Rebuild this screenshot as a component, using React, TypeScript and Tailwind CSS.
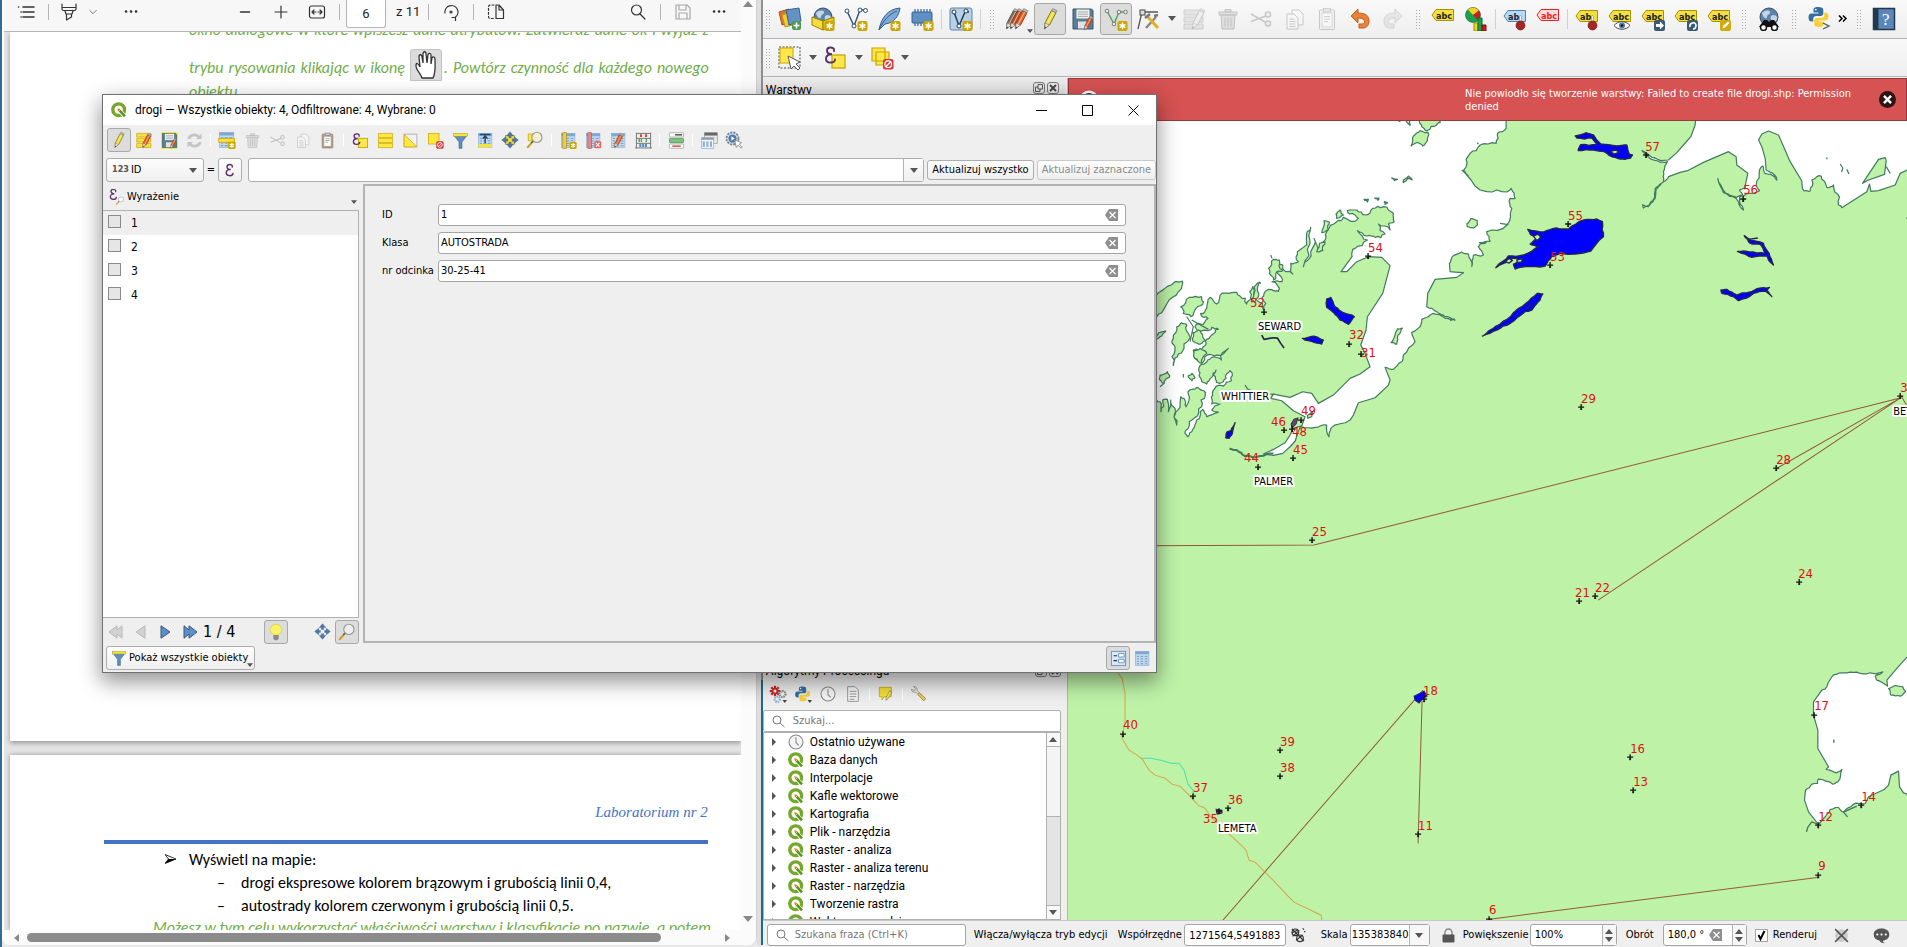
import React from "react";

const UI = "[font-family:'DejaVu_Sans_Condensed','Noto_Sans',sans-serif]";
const SEGOE = "[font-family:Roboto,'Open_Sans',sans-serif]";
const DOC = "[font-family:Carlito,Lato,sans-serif]";

type Kids = { children?: React.ReactNode };

/* ---------- icon helpers ---------- */

function Svg({ size = 24, children, faded = false }: Kids & { size?: number; faded?: boolean }) {
  return (
    <svg width={size} height={size} viewBox="0 0 24 24" fill="none" aria-hidden="true" className={faded ? "shrink-0 opacity-35 grayscale" : "shrink-0"}>
      {children}
    </svg>
  );
}

const Pencil = ({ fill = "#f0dc3c", tip = "#8a7a20", dx = 0 }: { fill?: string; tip?: string; dx?: number }) => (
  <g transform={`translate(${dx} 0)`}>
    <path d="M7 16 13.5 3.5l4.5 2.2L11.5 18 7 21z" fill={fill} stroke={tip} />
    <path d="m9.3 17 6.3-12" stroke="#fff" strokeOpacity=".6" />
    <path d="m7 16-.6 6 5-4-1.6-.6-1-.8z" fill="#e9dfc8" stroke="#777" strokeWidth=".7" />
    <path d="m6.5 22 .3-2.4 1.5.8z" fill="#333" />
    <path d="m13.5 3.5 1.2-2 4.4 2.2-1.1 2z" fill="#b9bdb6" stroke="#777" strokeWidth=".6" />
  </g>
);

const Star = () => (
  <g>
    <rect x="13.5" y="14" width="10" height="10" rx="2" fill="#c9a600" />
    <path d="M18.5 15.6v6.8M15.5 17.3l6 3.4M15.5 20.7l6-3.4" stroke="#fff" strokeWidth="1.5" />
  </g>
);

const Epsilon = ({ t = "" }: { t?: string }) => (
  <path transform={t} d="M15 6.5C15 4 8 3.500 8 7.500c0 3 3 3.700 5 3.700-3 0-6 1-6 4.500 0 5 8.500 5 9 .8M15 6.500v1.600" stroke="#5a2f6b" strokeWidth="1.900" strokeLinecap="round" />
);

const Tag = ({ label = "abc", fill = "#f3df3f", stroke = "#a89000", color = "#222" }: { label?: string; fill?: string; stroke?: string; color?: string }) => (
  <g>
    <path d="M1 9 5 3.500h17.500v11H5z" fill={fill} stroke={stroke} />
    <text x="5" y="12.500" fontSize="9" fontWeight="700" fill={color} className={UI}>{label}</text>
  </g>
);

const Pin = () => (
  <g>
    <path d="M17.500 16V8.500" stroke="#888" strokeWidth="2" />
    <path d="M17.500 16V9" stroke="#eee" />
    <circle cx="17.500" cy="18.500" r="4.500" fill="#a52626" stroke="#6f1414" strokeWidth=".6" />
  </g>
);

const QMark = ({ size = 16 }: { size?: number }) => (
  <Svg size={size}>
    <circle cx="11.500" cy="11.500" r="8.800" stroke="#74a72c" strokeWidth="5" />
    <path d="m12 12 8.500 9.500" stroke="#fff" strokeWidth="6" />
    <path d="m13 13 8 8.500" stroke="#5c9420" strokeWidth="4" />
    <path d="m9.500 9.500 5 1-4 4z" fill="#ee7913" />
  </Svg>
);

const Python = () => (
  <g>
    <path d="M11 2c-3.500 0-4.500 1.200-4.500 3v2.500h5v1H4.500C2.500 8.500 1.500 10 1.500 12.500s1 4 3 4h1.700V14c0-1.800 1.300-3 3-3h4.600c1.500 0 2.500-1 2.500-2.500V5c0-2-1.500-3-5.300-3z" fill="#356f9f" />
    <path d="M12 22c3.500 0 4.500-1.200 4.500-3v-2.500h-5v-1h7c2 0 3-1.500 3-4s-1-4-3-4h-1.200V10c0 1.800-1.300 3-3 3H9.700c-1.500 0-2.500 1-2.500 2.500V19c0 2 1.300 3 4.800 3z" fill="#f5cf3c" />
    <circle cx="8.800" cy="4.600" r=".9" fill="#fff" />
  </g>
);

const Disk = ({ bg = "" }: { bg?: string }) => (
  <g>
    {bg && <rect x="0" y="0" width="24" height="24" fill={bg} />}
    <path d="M2 2h18.500L22 3.500V22H2z" fill="#5b7d94" stroke="#35566b" />
    <rect x="5.500" y="2.500" width="13" height="9" fill="#eee" />
    <path d="M7 5h10M7 7.200h10M7 9.400h10" stroke="#aaa" />
    <rect x="7" y="14.500" width="9" height="7" fill="#dde3e6" />
    <g transform="translate(9 8) scale(.68)"><Pencil fill="#e8642a" tip="#a33b10" /></g>
  </g>
);

const Scissors = () => (
  <g stroke="#777" strokeWidth="1.600">
    <path d="M2 7 16 15M2 14.500 17 9" />
    <circle cx="19" cy="7.500" r="2.500" />
    <circle cx="19" cy="16.500" r="2.500" />
  </g>
);

const CopyI = () => (
  <g fill="#fff" stroke="#777">
    <path d="M10 3h7l4 4v11H10z" />
    <path d="M5 7h7l4 4v11H5z" />
    <path d="M7.500 12h5M7.500 14.500h6M7.500 17h6M7.500 19.500h6" />
  </g>
);

const PasteI = ({ fill = "#eee" }: { fill?: string }) => (
  <g>
    <rect x="4.500" y="3" width="15" height="19.500" rx="1" fill={fill} stroke="#777" />
    <rect x="7" y="6" width="10" height="14" fill="#fff" stroke="#888" strokeWidth=".7" />
    <path d="M9 9.500h6M9 12h6M9 14.500h4" stroke="#888" />
    <rect x="8.500" y="1.500" width="7" height="3.500" fill="#ccc" stroke="#777" strokeWidth=".8" />
  </g>
);

const Trash = () => (
  <g stroke="#8d5d5d" fill="#d7b2b2">
    <path d="M3 5h18v3H3zM9 2.500h6V5H9zM5 8h14l-1 14H6z" />
    <path d="M9 10.500v9M12 10.500v9M15 10.500v9" />
  </g>
);

const Funnel = () => (
  <g>
    <path d="M3 5h18l-7 9v9h-4v-9z" fill="#5f8fc4" stroke="#3c6690" />
    <rect x="2" y="2" width="20" height="4" fill="#f7e33e" stroke="#9a8a20" strokeWidth=".6" />
  </g>
);

const FourArrows = ({ center = false }: { center?: boolean }) => (
  <g>
    {center && <rect x="6" y="6" width="12" height="12" fill="#f5df3a" stroke="#c5a600" />}
    <path d="m12 1 4.500 5.500h-3V9h-3V6.500h-3zM12 23l4.500-5.500h-3V15h-3v2.500h-3zM1 12l5.500-4.500v3H9v3H6.500v3zM23 12l-5.500-4.500v3H15v3h2.500v3z" fill="#4d79ab" stroke="#2c4f78" strokeWidth=".5" />
  </g>
);

const Lens = ({ fill = "#eee" }: { fill?: string }) => (
  <g>
    <path d="m2.500 21.500 6-7" stroke="#c99f2a" strokeWidth="3" strokeLinecap="round" />
    <path d="m7 16 3-3" stroke="#555" strokeWidth="1.600" />
    <circle cx="14.500" cy="8.500" r="6.800" fill={fill} stroke="#999" strokeWidth="1.500" />
  </g>
);

const TableI = ({ children }: Kids) => (
  <g>
    <rect x="2" y="2" width="19" height="20" fill="#c6dbef" stroke="#8fb2d4" />
    <rect x="2" y="2" width="19" height="4" fill="#7ea8d3" />
    <path d="M4 9h3M4 12.500h3M4 16h3M4 19.500h3M9 9h4M9 12.500h4M9 16h4M9 19.500h4M15 9h4M15 12.500h4M15 16h4M15 19.500h4" stroke="#6f9ac6" strokeWidth="1.400" />
    {children}
  </g>
);

const NoBadge = () => (
  <g>
    <rect x="13" y="13" width="10.500" height="10.500" rx="2" fill="#d83a3a" />
    <circle cx="18.200" cy="18.200" r="3.300" stroke="#fff" strokeWidth="1.200" />
    <path d="m16 20.500 4.500-4.500" stroke="#fff" strokeWidth="1.200" />
  </g>
);

const Globe = () => (
  <g>
    <circle cx="12" cy="10" r="9" fill="#5d83ab" stroke="#33516f" />
    <path d="M5 6c3-3 7-3 8-1s-3 2-3 5-4 1-5-4zM14 9c2-2 5-1 6 1s-2 6-4 5-3-4-2-6z" fill="#c5d4e4" />
  </g>
);

const Clear = () => (
  <svg width="13" height="12" viewBox="0 0 13 12" aria-hidden="true">
    <path d="M4 0h9v12H4L0 6z" fill="#8e8e8e" />
    <path d="m4.500 3 6 6m0-6-6 6" stroke="#fff" strokeWidth="1.200" />
  </svg>
);

const Down = ({ small = false }: { small?: boolean }) => (
  <svg width={small ? 6 : 8} height={small ? 4 : 5} viewBox="0 0 8 5" aria-hidden="true" className="shrink-0"><path d="M0 0h8L4 5z" fill="#555" /></svg>
);

/* ---------- toolbar parts ---------- */

function Tool({ label, pressed = false, children }: Kids & { label: string; pressed?: boolean }) {
  return (
    <button type="button" aria-label={label} className={pressed ? "relative flex h-8 w-8 shrink-0 items-center justify-center rounded-[3px] border border-[#a8a8a8] bg-[#dcdcdc]" : "relative flex h-8 w-8 shrink-0 items-center justify-center"}>
      {children}
    </button>
  );
}

function Mini({ label, pressed = false, children }: Kids & { label: string; pressed?: boolean }) {
  return (
    <button type="button" aria-label={label} className={pressed ? "flex h-6 w-6 shrink-0 items-center justify-center rounded-[3px] border border-[#a8a8a8] bg-[#dcdcdc]" : "flex h-6 w-6 shrink-0 items-center justify-center"}>
      {children}
    </button>
  );
}

const Sep = () => <span className="mx-[2px] h-5 w-px shrink-0 bg-[#d2d2d2]" />;
const MiniSep = () => <span className="mx-[3px] h-3 w-px shrink-0 bg-white" />;
const Dots = () => <span className="block h-5 w-[5px] bg-[radial-gradient(#a9a9a9_1px,transparent_1px)] bg-[size:3px_3px]" />;
const Grip = () => <span className="flex w-4 shrink-0 justify-center"><Dots /></span>;
const GripStart = () => <span className="flex w-2.5 shrink-0 justify-center"><Dots /></span>;
const Drop = ({ label }: { label: string }) => (
  <button type="button" aria-label={label} className="flex h-8 w-3 shrink-0 items-center justify-center"><Down /></button>
);

function MainToolbar() {
  return (
    <div className="flex h-[39px] shrink-0 items-center gap-px overflow-hidden border-b border-[#b4b4b4] bg-linear-to-b from-[#f9f9f9] to-[#eeeeee] pb-px">
      <GripStart />
      <Tool label="Dodaj warstwę"><Svg><path d="M1 5 11 2l3 13L4 18z" fill="#e0782a" stroke="#a8501a" /><path d="m4 8 11-4 3 13-11 3z" fill="#f2cb36" stroke="#b8901a" /><path d="m8 3 13-2 2 13-12 4z" fill="#6492c4" stroke="#34618f" /><rect x="14" y="14" width="9" height="9" rx="2" fill="#4e9a54" /><path d="M18.500 15.500v6M15.500 18.500h6" stroke="#fff" strokeWidth="1.600" /></Svg></Tool>
      <Tool label="Nowa GeoPackage"><Svg><Globe /><path d="m1 10 11 4v9L1 18z" fill="#f5dd3a" stroke="#9a8000" /><path d="m23 10-11 4v9l11-5z" fill="#e2c820" stroke="#9a8000" /><Star /></Svg></Tool>
      <Tool label="Nowa warstwa shapefile"><Svg><path d="m3 4 7 15 6-16h5" stroke="#2c4f70" strokeWidth="1.400" /><g fill="#fff" stroke="#2c4f70"><circle cx="3" cy="4" r="2" /><circle cx="10" cy="19" r="2" /><circle cx="16" cy="3" r="2" /><circle cx="21.500" cy="3.500" r="2" /></g><Star /></Svg></Tool>
      <Tool label="Nowa warstwa SpatiaLite"><Svg><path d="M2 23C4 12 10 2 23 1c-1 8-6 15-15 16z" fill="#7fa8d4" stroke="#34618f" /><path d="M2 23C6 14 12 7 20 4" stroke="#34618f" /><Star /></Svg></Tool>
      <Tool label="Nowa warstwa tymczasowa"><Svg><path d="M5 2v17M8 2v17M11 2v17M14 2v17M17 2v17M20 2v17" stroke="#34618f" strokeWidth="1.200" /><rect x="2" y="5" width="20" height="11" rx="1" fill="#5f8fc4" stroke="#34618f" /><Star /></Svg></Tool>
      <Sep />
      <Tool label="Nowa warstwa wirtualna"><Svg><rect x="1" y="1" width="22" height="22" rx="2" fill="#b9cfe6" stroke="#5f86ad" /><path d="m5 5 5 14 6-14h4" stroke="#1f3f5f" strokeWidth="1.500" /><g fill="#fff" stroke="#1f3f5f"><circle cx="5" cy="5" r="2" /><circle cx="10" cy="19" r="2" /><circle cx="17" cy="4" r="2" /></g><Star /></Svg></Tool>
      <Sep />
      <Grip />
      <Tool label="Bieżące edycje"><Svg><Pencil fill="#7d7466" tip="#5a5348" dx={-5} /><Pencil fill="#c4532a" tip="#8a3310" dx={-1} /><Pencil fill="#e8642a" tip="#a33b10" dx={4} /></Svg><span className="absolute right-0 bottom-[2px]"><Down small /></span></Tool>
      <Tool label="Tryb edycji" pressed><Svg><Pencil /></Svg></Tool>
      <Tool label="Zapisz zmiany"><Svg><Disk /></Svg></Tool>
      <Tool label="Dodaj linię" pressed><Svg><path d="m3 4 7 13 5-12h6" stroke="#55a060" strokeWidth="1.500" /><g fill="#eee" stroke="#777"><circle cx="3" cy="4" r="1.800" /><circle cx="10" cy="17" r="1.800" /><circle cx="15" cy="5" r="1.800" /><circle cx="21.500" cy="5" r="1.800" /></g><Star /></Svg></Tool>
      <Tool label="Edycja wierzchołków"><Svg><path d="M1 22 5 5h16" stroke="#555" strokeWidth="1.300" /><rect x="3" y="3" width="5" height="5" fill="#ddd" stroke="#444" /><path d="m9 21 10-11" stroke="#888" strokeWidth="2.500" /><path d="m10 9 11 12" stroke="#e0b020" strokeWidth="3" /><path d="m8 11 5-4M17 9l4-1" stroke="#777" strokeWidth="2.500" /></Svg></Tool>
      <Drop label="Wybór narzędzia wierzchołków" />
      <Tool label="Zmień atrybuty"><Svg faded><path d="M1 3h19v5H1zM1 10h19v5H1zM1 17h19v5H1z" fill="#cfc79a" stroke="#999060" /><Pencil dx={3} fill="#ddd" tip="#777" /></Svg></Tool>
      <Tool label="Usuń zaznaczone"><Svg faded><Trash /></Svg></Tool>
      <Tool label="Wytnij"><Svg faded><Scissors /></Svg></Tool>
      <Tool label="Kopiuj"><Svg faded><CopyI /></Svg></Tool>
      <Tool label="Wklej"><Svg faded><PasteI /></Svg></Tool>
      <Tool label="Cofnij"><Svg><path d="m3 10 7-7v4c8 0 11 3 11 8s-3 7-6 7h-4v-4h3c4 0 4-6-4-6v5z" fill="#e8823a" stroke="#c0601c" transform="translate(0 -1)" /></Svg></Tool>
      <Tool label="Ponów"><Svg faded><path d="m21 10-7-7v4C6 7 3 10 3 15s3 7 6 7h4v-4h-3c-4 0-4-6 4-6v5z" fill="#ccc" stroke="#999" transform="translate(0 -1)" /></Svg></Tool>
      <Grip />
      <Tool label="Etykiety"><Svg><g transform="translate(0 -1)"><Tag /></g></Svg></Tool>
      <Tool label="Diagramy"><Svg><circle cx="9" cy="8" r="7.500" fill="#16a34a" stroke="#444" strokeWidth=".6" /><path d="M9 8 4 2.500A7.500 7.500 0 0 1 15 4z" fill="#f5d21f" /><path d="M9 8 15 3.500a8 8 0 0 1-1 10z" fill="#c81e1e" /><path d="M10 16h4v8h-4z" fill="#f5d21f" stroke="#a38a00" /><path d="M14 11h4v13h-4z" fill="#16a34a" stroke="#0a6a2a" /><path d="M18 18h4v6h-4z" fill="#c81e1e" stroke="#7a0e0e" /></Svg></Tool>
      <Sep />
      <Tool label="Podświetl przypięte"><Svg><Tag label="ab" fill="#b8d8f8" stroke="#4a80b8" /><Pin /></Svg></Tool>
      <Tool label="Niewidoczne etykiety"><Svg><g transform="translate(0 -1)"><Tag fill="#fbdcdc" stroke="#f02020" color="#f02020" /></g></Svg></Tool>
      <Sep />
      <Tool label="Przypnij etykiety"><Svg><Tag label="ab" /><Pin /></Svg></Tool>
      <Tool label="Pokaż etykiety"><Svg><Tag /><path d="M6 18.500c4-5 12-5 16 0-4 5-12 5-16 0z" fill="#fff" stroke="#444" /><circle cx="14" cy="18.500" r="3" fill="#4d79ab" /><circle cx="14" cy="18.500" r="1.200" fill="#111" /></Svg></Tool>
      <Tool label="Przesuń etykietę"><Svg><Tag /><rect x="13" y="13" width="11" height="11" rx="2" fill="#3d5a70" /><path d="M15 17h4v-2.500l4 4-4 4V20h-4z" fill="#fff" /></Svg></Tool>
      <Tool label="Obróć etykietę"><Svg><Tag /><rect x="13" y="13" width="11" height="11" rx="2" fill="#3d5a70" /><path d="M16 20c-1-4 5-6 6-2 0 2-1 4-3 4" stroke="#fff" strokeWidth="1.600" /></Svg></Tool>
      <Tool label="Edytuj etykietę"><Svg><Tag /><rect x="13" y="13" width="11" height="11" rx="2" fill="#d0aa10" /><path d="m15.500 21.500 1-3 4.500-4 1.500 1.500-4.500 4.500z" fill="#fff" /></Svg></Tool>
      <Grip />
      <Tool label="MetaSearch"><Svg><Globe /><path d="M7 13h3l2 2 2-2h3l5 7H2z" fill="#111" /><circle cx="6.500" cy="20.500" r="3" fill="#fff" stroke="#111" strokeWidth="1.500" /><circle cx="17.500" cy="20.500" r="3" fill="#fff" stroke="#111" strokeWidth="1.500" /></Svg></Tool>
      <Grip />
      <Tool label="Konsola Pythona"><Svg><g transform="translate(0 -2)"><Python /></g><path d="m16 16 6 3-6 3" stroke="#555" strokeWidth="1.300" /></Svg></Tool>
      <button type="button" aria-label="Więcej narzędzi" className="flex h-8 w-3.5 shrink-0 items-center justify-center">
        <svg width="9" height="7" viewBox="0 0 9 7" fill="none" stroke="#000" strokeWidth="1.500" aria-hidden="true"><path d="m1 .5 3 3-3 3M5 .5l3 3-3 3" /></svg>
      </button>
      <Grip />
      <Tool label="Pomoc"><Svg><rect x="1.500" y="1.500" width="21" height="21" fill="#5d86b8" stroke="#22384f" strokeWidth="1.500" /><rect x="2" y="2" width="4.500" height="20" fill="#22384f" /><text x="10" y="18" fontSize="17" fill="#fff" className="[font-family:'Liberation_Serif',serif]">?</text></Svg></Tool>
    </div>
  );
}

function SelectToolbar() {
  return (
    <div className="flex h-[38px] shrink-0 items-center gap-px border-b border-[#b4b4b4] bg-linear-to-b from-[#f9f9f9] to-[#eeeeee]">
      <GripStart />
      <Tool label="Wybierz obiekty"><Svg><rect x="1" y="1" width="21" height="21" stroke="#444" strokeDasharray="2 1.500" /><rect x="2" y="2" width="13" height="15" fill="#fde74a" stroke="#c9a600" /><path d="m10 10 3 13 3-3 4 4 2-2-4-4 4-2z" fill="#fff" stroke="#555" /></Svg></Tool>
      <Drop label="Sposób wyboru" />
      <Tool label="Wybierz wyrażeniem"><Svg><rect x="8" y="9" width="13" height="13" fill="#fde74a" stroke="#c9a600" strokeWidth="1.300" /><g transform="translate(-5 -3)"><Epsilon /></g></Svg></Tool>
      <Drop label="Wybór wyrażeniem" />
      <Tool label="Usuń wybór"><Svg><path d="M2 2h13v13H2zM6 6h13v13H6z" fill="#fde74a" stroke="#c9a600" strokeWidth="1.200" /><NoBadge /></Svg></Tool>
      <Drop label="Usuwanie wyboru" />
    </div>
  );
}

/* ---------- map ---------- */

function rough(src: string, amp: number, depth = 2): string {
  let pts = src.trim().split(/\s+/).map((p) => p.split(",").map(Number));
  let seed = 11;
  const rnd = () => {
    seed = (seed * 1103515245 + 12345) % 2147483648;
    return seed / 2147483648 - 0.5;
  };
  for (let d = 0; d < depth; d++) {
    const out: number[][] = [];
    for (let i = 0; i < pts.length - 1; i++) {
      const [x1, y1] = pts[i];
      const [x2, y2] = pts[i + 1];
      const k = rnd() * amp;
      out.push(pts[i], [Math.round((x1 + x2) / 2 - (y2 - y1) * k), Math.round((y1 + y2) / 2 + (x2 - x1) * k)]);
    }
    out.push(pts[pts.length - 1]);
    pts = out;
  }
  return pts.map((p) => p.join(",")).join(" ");
}

const FJORDS = rough(
  "280,892 300,905 303,935 308,900 322,898 325,935 332,900 345,925 350,975 353,930 362,890 372,895 378,920 384,880 395,868 410,862 432,872 436,885 425,920 405,952 385,985 375,995 384,1010 398,988 410,960 428,928 440,950 475,936 455,930 480,912 455,912 458,885 464,866 490,858 514,842 510,812 498,835 478,850 466,838 468,810 455,832 440,852 424,838 416,812 440,786 462,770 484,780 505,745 470,765 440,766 424,790 405,775 400,750 430,740 440,718 462,700 475,688 455,682 444,692 405,680 430,672 444,655 422,640 440,625 450,592 470,612 480,586 515,578 540,588 560,612 572,592 578,560 590,600 612,630 606,592 622,570 640,572 655,574 636,545 666,545 652,520 644,490 668,495 698,522 692,490 715,485 712,455 740,400 752,382 750,430 730,500 752,455 762,415 778,455 790,425 800,395 830,365 850,352 895,355 868,342 862,332 890,330 915,345 938,325 970,320 1000,340 1002,365 985,372 990,390 955,372 975,402 945,412 920,408 892,392 922,420 885,445 876,470",
  0.5,
);
const NORTH_EAST = rough("1270,465 1255,440 1262,430 1278,428 1258,428 1290,424 1280,395 1340,375 1355,325 1350,295 1365,295 1353,265 1340,276 1280,275 1220,225 1210,212 1218,200 1230,160 1260,135 1308,130 1312,100 1338,85", 0.3);
const WATER_MAIN = `275,55 ${FJORDS} 843,515 860,515 890,485 925,470 965,472 990,497 968,580 922,650 918,690 902,735 915,760 930,800 900,822 870,835 820,885 775,910 755,880 728,875 690,892 640,882 632,895 665,902 700,932 735,950 725,978 ${rough("725,980 765,982 800,975 807,1010 812,985 870,960", 0.3)} 880,945 895,908 945,893 985,855 990,840 975,802 ${rough("975,802 1000,808 1025,785 1030,765 1065,725 1055,697 1080,680 1085,658 1120,640 1155,655 1185,660 1155,650 1130,635 1100,620", 0.25)} 1103,580 1125,538 1190,532 1210,518 1185,516 1170,515 ${rough("1168,490 1175,472 1205,456 1225,462 1235,500 1240,465 1270,465", 0.3)} ${NORTH_EAST} 1338,55`;

const ISLANDS: [string, number][] = [
  ["280,590 300,575 345,545 367,543 365,565 340,590 305,638 280,665", 0.25],
  ["280,720 296,698 317,693 305,708 280,722", 0.2],
  ["362,620 388,592 424,590 430,605 408,625 392,650 370,640 362,620", 0.5],
  ["350,680 365,668 380,676 385,700 372,745 352,770 340,796 336,770 345,740 340,715 350,680", 0.6],
  ["398,698 415,690 428,705 436,722 415,732 398,722 398,698", 0.4],
  ["400,752 420,745 440,760 425,790 405,775 400,752", 0.5],
  ["300,825 322,815 328,832 312,850 300,840 300,825", 0.5],
  ["384,828 396,820 405,832 396,842 384,828", 0.5],
  ["625,505 640,478 658,480 668,510 650,515 640,540 628,520 625,505", 0.6],
  ["575,600 582,560 598,548 596,580 585,605 575,600", 0.5],
  ["785,398 792,362 808,366 804,390 785,398", 0.4],
  ["770,455 778,430 795,425 788,452 770,455", 0.4],
  ["830,355 828,342 840,330 850,345 830,355", 0.4],
  ["912,298 925,298 922,306 912,298", 0.4],
  ["944,294 957,294 954,301 944,294", 0.4],
  ["973,305 983,308 975,314 973,305", 0.4],
  ["1078,60 1085,80 1100,93 1112,82 1125,78 1140,68 1130,55 1078,60", 0.5],
  ["1035,60 1050,76 1048,60 1035,60", 0.4],
  ["1053,138 1060,108 1080,92 1104,97 1102,122 1088,138 1075,128 1053,138", 0.3],
  ["1030,240 1045,228 1056,240 1042,236 1030,248 1030,240", 0.4],
  ["995,234 1012,238 1003,242 995,234", 0.4],
  ["1220,372 1232,356 1252,362 1252,375 1240,384 1222,380 1220,372", 0.3],
  ["993,728 1006,700 1012,686 1027,684 1014,705 1010,732 993,728", 0.3],
];

const WATER_NE = `737,20 735,45 722,80 700,105 680,128 655,150 632,152 ${rough("632,152 605,142 590,130 575,122 600,146 630,157 652,155 640,185 640,215 615,235 612,265 595,290 577,284 580,294 598,286 615,265 618,238 640,215 655,200", 0.2)} 690,187 712,182 760,157 835,125 858,140 860,165 893,190 885,228 ${rough("885,235 868,240 878,255 860,262 825,248 803,205 820,248 858,265 880,300 868,262 895,250 928,242 918,225 928,180 938,168 944,190 960,192 980,210 965,188 948,180", 0.25)} 945,145 935,110 925,90 935,72 955,63 985,75 1020,155 1055,213 ${rough("1055,213 1062,243 1080,243 1085,210 1113,198 1130,232 1150,225 1168,262 1165,285 1175,293", 0.45)} 1250,245 1258,222 1262,244 1285,242 1335,225 1350,190 1371,180 1385,178 1385,20`;
const WATER_SE = `1350,40 1310,85 1280,120 1282,138 ${rough("1282,138 1250,120 1245,108 1268,95 1240,100 1200,100 1160,98 1120,104 1100,140 1085,150", 0.25)} 1060,185 1060,225 1073,270 1073,325 1105,380 ${rough("1105,380 1098,388 1130,398 1145,388 1133,425 1118,432 1075,417 1072,430 1055,432 1036,450", 0.25)} 1033,480 1045,515 1075,553 1090,535 ${rough("1090,535 1110,508 1135,502 1150,516 1180,492 1215,490", 0.25)} 1225,470 1272,448 1285,435 1292,405 1315,393 1318,440 1330,458 1350,465`;

const LAKES = [
  "375,78 408,68 430,75 452,102 500,108 530,105 537,132 547,135 540,145 510,147 480,138 462,125 430,120 384,122 392,104 440,104 425,84 380,84 375,78",
  "233,358 280,366 318,354 355,357 400,330 440,327 457,335 460,380 422,423 330,430 305,440 285,468 225,470 195,477 190,462 212,450 185,444 160,460 137,473 175,438 220,435 265,410 240,402 262,385 240,372 233,358",
  "97,678 120,660 150,642 190,608 225,582 262,550 278,552 270,570 245,600 225,605 180,640 140,660 97,678",
  "882,377 902,390 940,400 957,430 970,465 955,450 950,438 905,442 862,424 900,426 945,430 930,403 900,400 882,377",
  "812,540 830,538 860,555 920,536 958,532 950,540 965,560 945,543 910,550 865,572 850,560 815,550 812,540",
  "-370,567 -358,562 -345,590 -320,608 -287,620 -305,643 -330,630 -350,607 -370,592 -370,567",
  "-443,685 -410,678 -380,690 -385,702 -415,694 -435,690 -443,685",
  "-645,938 -653,970 -663,985 -673,983 -670,966 -658,962 -645,938",
].map((l) => rough(l, 0.15));

const MARKS: [number, number, string, number, number][] = [
  [1368, 256, "54", 1368, 252], [1264, 312, "52", 1250, 307], [1349, 344, "32", 1349, 339], [1361, 354, "31", 1361, 357],
  [1301, 420, "49", 1301, 415], [1284, 430, "46", 1271, 426], [1292, 429, "48", 1292, 436], [1293, 458, "45", 1293, 454],
  [1258, 467, "44", 1244, 462], [1646, 155, "57", 1645, 151], [1743, 199, "56", 1743, 194], [1568, 224, "55", 1568, 220],
  [1550, 265, "53", 1550, 261], [1581, 407, "29", 1581, 403], [1776, 468, "28", 1776, 464], [1900, 396, "30", 1900, 392],
  [1312, 540, "25", 1312, 536], [1799, 582, "24", 1798, 578], [1579, 601, "21", 1575, 597], [1595, 596, "22", 1595, 592],
  [1424, 699, "18", 1423, 695], [1418, 834, "11", 1418, 830], [1123, 734, "40", 1123, 729], [1280, 750, "39", 1280, 746],
  [1280, 776, "38", 1280, 772], [1193, 796, "37", 1193, 792], [1228, 808, "36", 1228, 804], [1219, 811, "35", 1203, 823],
  [1489, 919, "6", 1489, 914], [1818, 875, "9", 1818, 870], [1818, 825, "12", 1818, 821], [1861, 805, "14", 1861, 801],
  [1633, 790, "13", 1633, 786], [1630, 757, "16", 1630, 753], [1814, 715, "17", 1814, 710],
];
const TOWNS: [string, number, number][] = [["SEWARD", 1258, 330], ["WHITTIER", 1221, 400], ["PALMER", 1254, 485], ["LEMETA", 1218, 832], ["BETHEL", 1893, 415]];

function MapCanvas() {
  return (
    <svg viewBox="1068 121 839 799" preserveAspectRatio="xMinYMin slice" className="absolute inset-0 h-full w-full bg-[#bdf2a7]" role="img" aria-label="Mapa">
      <g strokeWidth="3.600" stroke="#417a5f" strokeLinejoin="round">
        <g transform="translate(1060 100) scale(.33333)">
          <polygon points={WATER_MAIN} fill="#fff" />
          {ISLANDS.map(([p, a]) => <polygon key={p} points={rough(p, a)} fill="#bdf2a7" />)}
          <path d="M555 855l8 12 20 8 30 6 30 2" fill="none" />
          <path d="M742 946l15-10-2 14-12 4z" fill="#bdf2a7" />
          <polygon points="722,978 700,985 690,1005 675,1028 640,1048 610,1062 640,1066 668,1060 690,1040 706,1022 712,1000" fill="#fff" />
          <polyline points={rough("508,1046 530,1050 555,1068 600,1068 640,1060", 0.3)} fill="none" strokeWidth="6" />
          <path d="M395 660l50 28M380 650l20 30-10 45M300 860l12-10M370 822v10M1015 62l6 4M1252 130h3M598 545l4 6M632 465l4 10" fill="none" />
        </g>
        <g transform="translate(1450 110) scale(.33333)">
          <polygon points={WATER_NE} fill="#fff" />
          <polygon points="1237,220 1285,148 1305,143 1308,152 1303,193 1255,210" fill="#bdf2a7" />
          <path d="M1308 170l12 20M1130 142v6M1170 162l8 12-4 12M1190 178l6 14M83 98v5M1368 325h6" fill="none" />
          <path d="M0 632l14-6M150 340l25 4M35 180l20 18" fill="none" />
        </g>
        <g transform="translate(1460 640) scale(.33333)">
          <polygon points={WATER_SE} fill="#fff" />
          <polygon points={rough("1285,145 1300,138 1328,140 1336,155 1320,168 1292,165 1285,145", 0.3)} fill="#bdf2a7" />
          <path d="M1121 298v10M1075 553l-20-8-12 16-4 14M1150 516l12 14M1150 516l40-18" fill="none" strokeWidth="4" />
        </g>
      </g>
      <g transform="translate(1450 110) scale(.33333)" fill="#0000fe" stroke="#26264a" strokeWidth="4" strokeLinejoin="round">
        {LAKES.map((p) => <polygon key={p} points={p} />)}
        <polyline points="-565,675 -558,688 -530,683 -518,684 -508,700 -498,714" fill="none" strokeWidth="5" />
        <path d="M895 388l28-4M480 125l15-5 12 6-14 6zM165 455l12-10 10 6-10 8zM228 598l18-18" fill="#bdf2a7" />
        <path d="M250 378l14-6 8 10-12 10zM200 450l18-4-4 10-12 2z" fill="#bdf2a7" />
      </g>
      <g fill="none" stroke="#93593a" strokeWidth="1">
        <path d="M1060 546 1314 545 1900 398 1777 468M1900 398 1598 600M1901 396 1908 408" />
        <path d="M1423 690 1222 921M1422 700 1418 843M1490 919 1819 877" />
      </g>
      <g fill="none" strokeWidth="1">
        <path d="M1118 673l4 5 3 15 0 30-3 12 0 3 7 12 8 5 6 5 6 10 6 5 10 3 7 6 8 2 8 8 10 11 7 3 6 9 9 8 8 8 10 9 8 8 3 10 6 2 17 17 16 17 6 6 27 13 1 6 8 6 3 4" stroke="#d9a54c" />
        <path d="M1141 758l10 0 10 2 10 3h8l5 7 4 14 5 6 1 6" stroke="#49e0a8" />
      </g>
      <path d="M1414 696l4-2 6-3 3 5-5 3-3 4-4-3z" fill="#0000fe" stroke="#26264a" />
      <path d="M1291 424l3-5 4-1-2 6-4 4zM1216 809l6 1v3l-5 1z" fill="#5b4b66" stroke="#3a3048" />
      <g className={UI}>
        {MARKS.map(([x, y]) => <path key={`${x}-${y}`} d={`M${x - 3} ${y}h6M${x} ${y - 3}v6M${x - 1} ${y + 2}h2`} stroke="#111" strokeWidth="1.300" />)}
        {MARKS.map(([, , t, x, y]) => <text key={t} x={x} y={y} fontSize="13" fill="#e01010">{t}</text>)}
        {TOWNS.map(([t, x, y]) => <text key={t} x={x} y={y} fontSize="11" fill="#000" stroke="#fff" strokeWidth="4" strokeLinejoin="round" paintOrder="stroke">{t}</text>)}
      </g>
    </svg>
  );
}

/* ---------- PDF viewer ---------- */

const PBtn = ({ label, className, children }: Kids & { label: string; className: string }) => (
  <button type="button" aria-label={label} className={`flex h-6 shrink-0 items-center justify-center text-[#333] ${className}`}>{children}</button>
);
const PSep = () => <span className="h-4 w-px shrink-0 bg-[#b5b5b5]" />;
const Line = ({ children, size = 18 }: Kids & { size?: number }) => (
  <svg width={size} height={size} viewBox="0 0 18 18" fill="none" stroke="currentColor" strokeWidth="1.200" strokeLinecap="round" strokeLinejoin="round" aria-hidden="true">{children}</svg>
);
const More = () => <Line><path d="M4 8.500h.1M9 8.500h.1M14 8.500h.1" strokeWidth="2.600" /></Line>;

function PdfViewer() {
  return (
    <section className="flex w-2/5 shrink-0 overflow-hidden border-l-2 border-[#2d6e93] bg-[#e8e8e8] pb-[2px]">
      <div className="flex min-w-0 flex-1 flex-col overflow-hidden rounded-b-lg border-r border-[#cfcfcf] bg-[#fbfbfb] pl-[2px]">
        <div className="flex min-h-0 flex-1">
          <div className="flex min-w-0 flex-1 flex-col">
            <div className="flex h-8 shrink-0 items-start border-b border-[#b7b7b7] bg-[#f7f7f7] pl-2.5">
              <PBtn label="Spis treści" className="w-6"><Line><path d="M6 4h11M6 9h11M6 14h11M1.500 4h.1M4 9h.1M4 14h.1" strokeWidth="1.600" /></Line></PBtn>
              <span className="ml-2.5 flex h-6 items-center"><PSep /></span>
              <PBtn label="Wyróżnij" className="ml-2 w-6"><Line><path d="M2 1v5c0 1 .5 1.500 1.500 1.500h11c1 0 1.500-.5 1.500-1.500V1M2.500 4.500h13M5 8l1 3h6l1-3M6.500 11v6l5-3v-3" /></Line></PBtn>
              <PBtn label="Kolor wyróżnienia" className="w-6"><Line size={10}><path d="m3 6 6 6 6-6" /></Line></PBtn>
              <PBtn label="Więcej" className="ml-3.5 w-6"><More /></PBtn>
              <PBtn label="Pomniejsz" className="ml-[90px] w-6"><Line><path d="M4.500 9h9" strokeWidth="1.500" /></Line></PBtn>
              <PBtn label="Powiększ" className="ml-3 w-6"><Line><path d="M3 9h12M9 3v12" /></Line></PBtn>
              <PBtn label="Dopasuj szerokość" className="ml-3 w-6"><Line><rect x="1.500" y="3" width="15" height="12" rx="2" /><path d="M4 9h4M10 9h4M6 7 4 9l2 2M12 7l2 2-2 2" /></Line></PBtn>
              <span className="ml-2.5 flex h-6 items-center"><PSep /></span>
              <input aria-label="Numer strony" defaultValue="6" className={`ml-[6px] h-7 w-10 rounded-b-[3px] border border-t-0 border-[#b5b5b5] bg-white text-center text-[13px] text-[#222] ${SEGOE}`} />
              <span className={`ml-2.5 h-6 w-6 text-[13px] leading-6 whitespace-nowrap text-[#222] ${SEGOE}`}>z 11</span>
              <span className="ml-2 flex h-6 items-center"><PSep /></span>
              <PBtn label="Obróć" className="ml-2.5 w-6"><Line><path d="M3 10a6.500 6.500 0 1 1 10 4.500M10 14.500h3.500V18" /><circle cx="9" cy="9" r="1" /></Line></PBtn>
              <span className="ml-2.5 flex h-6 items-center"><PSep /></span>
              <PBtn label="Widok strony" className="ml-2.5 w-6"><Line><path d="M9 2h3l4.500 5v8.500H9z M12 2v5h4.500" /><path d="M7 2H3.500C2 2 1.500 3 1.500 4v9c0 1.500.5 2.500 2 2.500H7" strokeDasharray="2 2" /></Line></PBtn>
              <PBtn label="Szukaj" className="ml-auto w-6"><Line><circle cx="7.500" cy="7" r="5" /><path d="m11 11 5 5" /></Line></PBtn>
              <span className="ml-2.5 flex h-6 items-center"><PSep /></span>
              <PBtn label="Zapisz" className="ml-2.5 w-6 opacity-40"><Line><path d="M2 2h11l3 3v11H2zM5 2v5h7V2M5 16v-6h8v6" /></Line></PBtn>
              <PBtn label="Ustawienia" className="mr-2.5 ml-3 w-6"><More /></PBtn>
            </div>
            <div className="flex min-h-0 flex-1 flex-col overflow-hidden bg-[#e4e4e4] pl-[6px]">
              <article className={`h-[709px] shrink-0 overflow-hidden bg-white pr-8 pl-[179px] text-[16px] text-[#70ad47] italic shadow-[0_2px_5px_rgba(0,0,0,0.35)] ${DOC}`}>
                <p className="-mt-3 h-5 leading-5 [text-align-last:justify]">okno dialogowe w które wpiszesz dane atrybutów. Zatwierdź dane ok i wyjdź z</p>
                <p className="flex h-10 items-end justify-between whitespace-nowrap">
                  <span className="leading-6">trybu</span><span className="leading-6">rysowania</span><span className="leading-6">klikając</span><span className="leading-6">w</span><span className="leading-6">ikonę</span>
                  <span className="flex items-end gap-[2px]">
                    <span className="-mb-px flex h-8 w-8 items-center justify-center rounded-t-[3px] border border-[#c2c2c2] bg-[#dcdcdc]">
                      <svg width="22" height="28" viewBox="0 0 22 28" aria-hidden="true"><path d="M7 27c-1-4-6-8-6-12s2-3 4 1L4 6c0-3 3-3 3 0l1 6V3c0-3 3-3 3 0l1 9 1-8c0-2.500 3-2 3 0v9l1-6c1-2 3-1 3 1 0 7 1 13-2 19z" fill="#fff" stroke="#333" strokeWidth="1.300" /></svg>
                    </span>
                    <span className="leading-6">.</span>
                  </span>
                  <span className="leading-6">Powtórz</span><span className="leading-6">czynność</span><span className="leading-6">dla</span><span className="leading-6">każdego</span><span className="leading-6">nowego</span>
                </p>
                <p className="leading-6">obiektu.</p>
              </article>
              <article className={`mt-3.5 min-h-0 flex-1 overflow-hidden bg-white pr-[33px] pl-[94px] text-[16px] text-black shadow-[0_0_5px_rgba(0,0,0,0.35)] ${DOC}`}>
                <p className="pt-[47px] text-right text-[15px] leading-5 text-[#4472c4] italic [font-family:'Liberation_Serif',serif]">Laboratorium nr 2</p>
                <hr className="mt-[18px] h-1 border-0 bg-[#4472c4]" />
                <p className="mt-1 flex pl-[61px] leading-[23px]">
                  <svg width="12" height="10" viewBox="0 0 12 10" aria-hidden="true" className="mt-[6px] mr-3"><path d="M0 .5 11 5 0 9.500 3.500 5z" fill="none" stroke="#000" strokeWidth=".8" /><path d="M3.500 5H11L0 9.500z" fill="#000" /></svg>
                  Wyświetl na mapie:
                </p>
                <ul className="pl-[113px] leading-[23px]">
                  <li className="flex"><span className="w-6">–</span>drogi ekspresowe kolorem brązowym i grubością linii 0,4,</li>
                  <li className="flex"><span className="w-6">–</span>autostrady kolorem czerwonym i grubością linii 0,5.</li>
                </ul>
                <p className="ml-[49px] h-[23px] leading-[22px] whitespace-nowrap text-[#70ad47] italic [text-align-last:justify]">Możesz w tym celu wykorzystać właściwości warstwy i klasyfikację po nazwie, a potem</p>
              </article>
            </div>
          </div>
          <div className="flex w-[15px] shrink-0 flex-col items-center justify-between bg-[#fbfbfb] pt-[1px] pb-2">
            <svg width="10" height="6" viewBox="0 0 10 6" aria-hidden="true"><path d="M5 0l5 6H0z" fill="#888" /></svg>
            <svg width="10" height="6" viewBox="0 0 10 6" aria-hidden="true"><path d="M5 6l5-6H0z" fill="#888" /></svg>
          </div>
        </div>
        <div className="flex h-[15px] shrink-0 items-center bg-[#fbfbfb] pr-[26px] pl-2.5">
          <svg width="5" height="8" viewBox="0 0 5 8" aria-hidden="true"><path d="M5 0v8L0 4z" fill="#888" /></svg>
          <span className="mr-16 ml-2 h-[9px] flex-1 rounded-full bg-[#8b8b8b]" />
          <svg width="5" height="8" viewBox="0 0 5 8" aria-hidden="true"><path d="M0 0v8l5-4z" fill="#888" /></svg>
        </div>
      </div>
      <div className="w-[4px] shrink-0 bg-[#dedede]" />
      <div className="w-[2px] shrink-0 bg-linear-to-b from-[#8f8f8f] from-72% to-[#1f6a8c] to-72%" />
    </section>
  );
}

/* ---------- QGIS side panels ---------- */

const PanelButtons = () => (
  <span className="flex gap-[2px]">
    <button type="button" aria-label="Odepnij panel" className="flex h-3 w-3 items-center justify-center rounded-[3px] border border-[#777]"><svg width="8" height="8" viewBox="0 0 8 8" fill="none" stroke="#555" aria-hidden="true"><path d="M3 .5h4.500V5H3zM5 5v2.500H.5V3H3" /></svg></button>
    <button type="button" aria-label="Zamknij panel" className="flex h-3 w-3 items-center justify-center rounded-[3px] border border-[#777]"><svg width="8" height="8" viewBox="0 0 8 8" stroke="#444" strokeWidth="1.800" aria-hidden="true"><path d="m1 1 6 6m0-6L1 7" /></svg></button>
  </span>
);

const Clock = ({ size = 16 }: { size?: number }) => (
  <Svg size={size}><circle cx="12" cy="12" r="10.500" fill="#f4f4f4" stroke="#8a8a8a" strokeWidth="1.600" /><path d="M12 5v8l4 4" stroke="#8a8a8a" strokeWidth="1.600" /></Svg>
);

const SearchIcon = () => (
  <svg width="13" height="13" viewBox="0 0 13 13" fill="none" stroke="#777" aria-hidden="true" className="shrink-0"><circle cx="5" cy="5" r="4" /><path d="m8 8 4.500 4" /></svg>
);

const ALGS = ["Ostatnio używane", "Baza danych", "Interpolacje", "Kafle wektorowe", "Kartografia", "Plik - narzędzia", "Raster - analiza", "Raster - analiza terenu", "Raster - narzędzia", "Tworzenie rastra", "Wektor - narzędzia"];

function SidePanels() {
  return (
    <aside className={`flex w-[304px] shrink-0 flex-col bg-[#efefef] pr-[6px] text-[11px] ${UI}`}>
      <section className="min-h-0 flex-1">
        <header className="-mr-[4px] flex h-6 items-start justify-between bg-linear-to-b from-[#ececec] to-[#dcdcdc] pt-1 pr-[6px] pl-[3px]"><h2 className={`text-[12px] leading-4 ${SEGOE}`}>Warstwy</h2><PanelButtons /></header>
      </section>
      <section className="flex h-[257px] shrink-0 flex-col">
        <header className="flex h-[15px] items-center justify-between pl-[3px]"><h2 className={`text-[12px] ${SEGOE}`}>Algorytmy Processingu</h2><PanelButtons /></header>
        <div className="flex h-[31px] items-center gap-px pl-[3px]">
          <Mini label="Modele"><Svg size={18}><g stroke="#c62828" strokeWidth="3"><path d="M8 1v14M1 8h14M3 3l10 10M13 3 3 13" /></g><circle cx="8" cy="8" r="2" fill="#fff" /><circle cx="18" cy="12" r="4" stroke="#888" strokeWidth="3" strokeDasharray="2 1" /><circle cx="11" cy="19" r="3.500" stroke="#8fb0d6" strokeWidth="3" strokeDasharray="2 1" /><path d="M18 20h6l-3 4z" fill="#444" /></Svg></Mini>
          <Mini label="Skrypty"><Svg size={18}><Python /><path d="M18 20h6l-3 4z" fill="#444" /></Svg></Mini>
          <Mini label="Historia"><Clock /></Mini>
          <Mini label="Wyniki"><Svg size={16}><path d="M4 1h11l5 5v17H4z" fill="#f4f4f4" stroke="#999" strokeWidth="1.500" /><path d="M7 8h10M7 12h10M7 16h10M7 20h7" stroke="#999" strokeWidth="1.500" /></Svg></Mini>
          <MiniSep />
          <Mini label="Edycja w miejscu"><Svg size={16}><path d="M2 2h18v14H9l-3 5v-5H2z" fill="#f5df3a" stroke="#b89a00" /><g transform="translate(7 5) scale(.75)"><Pencil /></g></Svg></Mini>
          <MiniSep />
          <Mini label="Opcje"><Svg size={17}><path d="M2 6c0 4 4 5 6 4l10 11c2 2 5-1 3-3L10 8c1-3-1-6-5-6l3 3-2 3z" fill="#e8e8e8" stroke="#888" /><path d="m11 13 8 9 3-3-9-8z" fill="#ecd25a" stroke="#9a8228" /></Svg></Mini>
        </div>
        <label className="mt-px flex h-[22px] shrink-0 items-center gap-2 rounded-[2px] border border-[#b0b0b0] bg-white pl-2">
          <SearchIcon />
          <input placeholder="Szukaj..." aria-label="Szukaj algorytmu" className="min-w-0 flex-1 outline-none placeholder:text-[#777]" />
        </label>
        <div className="flex min-h-0 flex-1 border border-[#b0b0b0] bg-white">
          <ul className={`min-w-0 flex-1 overflow-hidden text-[12px] ${SEGOE}`}>
            {ALGS.map((a, i) => (
              <li key={a} className="flex h-[18px] items-center pl-2">
                <svg width="5" height="8" viewBox="0 0 5 8" aria-hidden="true" className="mr-[11px]"><path d="M0 0v8l4-4z" fill="#555" /></svg>
                {i === 0 ? <Clock /> : <QMark />}
                <span className="ml-[6px] leading-[18px] whitespace-nowrap">{a}</span>
              </li>
            ))}
          </ul>
          <div className="flex w-3.5 shrink-0 flex-col border-l border-[#b0b0b0] bg-[#e4e4e4]">
            <span className="flex h-3.5 items-center justify-center border-b border-[#b0b0b0] bg-[#f8f8f8]"><span className="rotate-180"><Down /></span></span>
            <span className="h-[70px] border-b border-[#b0b0b0] bg-[#f4f4f4]" />
            <span className="mt-auto flex h-3.5 items-center justify-center border-t border-[#b0b0b0] bg-[#f8f8f8]"><Down /></span>
          </div>
        </div>
      </section>
    </aside>
  );
}

const box = "flex h-[22px] shrink-0 items-center rounded-[3px] border border-[#a5a5a5] bg-white";

const Spin = () => (
  <span className="flex h-full w-3.5 shrink-0 flex-col items-center justify-center gap-[3px] border-l border-[#b5b5b5] bg-[#f7f7f7]"><span className="rotate-180"><Down /></span><Down /></span>
);

function StatusBar() {
  return (
    <footer className={`flex h-[27px] shrink-0 items-center border-t border-[#c8c8c8] bg-[#efefef] pt-[2px] pl-1 text-[11px] ${UI}`}>
      <label className={`${box} w-[199px] gap-[6px] pl-2`}>
        <SearchIcon />
        <input placeholder="Szukana fraza (Ctrl+K)" aria-label="Szukana fraza" className="min-w-0 flex-1 outline-none placeholder:text-[#777]" />
      </label>
      <span className="ml-2 min-w-0 flex-1 overflow-hidden whitespace-nowrap">Włącza/wyłącza tryb edycji aktywnej warstwy</span>
      <label htmlFor="coord" className="ml-2 w-[66px] whitespace-nowrap">Współrzędne</label>
      <input id="coord" defaultValue="1271564,5491883" className={`${box} w-[102px] text-center`} />
      <button type="button" aria-label="Zasięg" className="mx-1 flex w-4 justify-center"><Svg size={16}><g stroke="#333" strokeWidth="1.700"><path d="m3 3 18 18M3 9l9-5M4 14 14 5M9 20l10-8" /><circle cx="8" cy="8" r="5" /><circle cx="15" cy="17" r="5" /><path d="M19 2l2 2M21 7h2" /></g></Svg></button>
      <label htmlFor="scale" className="ml-[11px] w-[29px]">Skala</label>
      <span className={`${box} w-20`}>
        <input id="scale" defaultValue="135383840" className="min-w-0 flex-1 pl-px outline-none" />
        <span className="flex h-full w-5 items-center justify-center border-l border-[#b5b5b5] bg-[#f7f7f7]"><Down /></span>
      </span>
      <button type="button" aria-label="Zablokuj skalę" className="ml-3 flex w-3.5 justify-center"><svg width="13" height="15" viewBox="0 0 13 15" aria-hidden="true"><path d="M3 7V4.500a3.500 3.500 0 0 1 7 0V7" fill="none" stroke="#888" strokeWidth="1.500" /><rect x=".5" y="6.500" width="12" height="8" rx="1" fill="#555" /></svg></button>
      <label htmlFor="zoom" className="ml-[7px] w-[67px]">Powiększenie</label>
      <span className={`${box} w-[87px]`}><input id="zoom" defaultValue="100%" className="min-w-0 flex-1 pl-1 outline-none" /><Spin /></span>
      <label htmlFor="rot" className="ml-[9px] w-[37px]">Obrót</label>
      <span className={`${box} w-[84px]`}><input id="rot" defaultValue="180,0 °" className="min-w-0 flex-1 pl-1 outline-none" /><span className="mr-2.5"><Clear /></span><Spin /></span>
      <label className="ml-2 flex items-center gap-[5px]">
        <span className="relative flex h-[13px] w-[13px]">
          <input type="checkbox" defaultChecked className="h-[13px] w-[13px] appearance-none border border-[#a5a5a5] bg-white" />
          <svg width="13" height="13" viewBox="0 0 13 13" fill="none" stroke="#000" strokeWidth="2" aria-hidden="true" className="pointer-events-none absolute inset-0"><path d="m3.500 6 2 4 4-8" /></svg>
        </span>
        Renderuj
      </label>
      <button type="button" aria-label="Układ współrzędnych" className="ml-3 flex w-6 justify-center"><Svg size={17}><circle cx="12" cy="12" r="9" fill="#ccc" /><path d="m3 3 18 18M21 3 3 21" stroke="#555" strokeWidth="2.200" /></Svg></button>
      <button type="button" aria-label="Komunikaty" className="mr-3.5 ml-4 flex w-6 justify-center"><Svg size={17}><path d="M12 2c7 0 11 3.500 11 8.500S19 19 14 19c0 2 1 3 3 4-5 0-7-2-8-4-5-1-8-4-8-8.500C1 5.500 5 2 12 2z" fill="#555" /><path d="M6 10.500h.1M12 10.500h.1M18 10.500h.1" stroke="#fff" strokeWidth="3" strokeLinecap="round" /></Svg></button>
    </footer>
  );
}

/* ---------- attribute dialog ---------- */

const FIELDS = [["ID", "1"], ["Klasa", "AUTOSTRADA"], ["nr odcinka", "30-25-41"]];
const pushBtn = "rounded-[3px] border border-[#adadad] bg-linear-to-b from-[#fdfdfd] to-[#efefef]";

const NavArrow = ({ label, flip = false, double = false, off = false }: { label: string; flip?: boolean; double?: boolean; off?: boolean }) => (
  <button type="button" aria-label={label} className="flex h-6 w-6 shrink-0 items-center justify-center">
    <svg width="15" height="14" viewBox="0 0 15 14" aria-hidden="true" className={flip ? "-scale-x-100" : ""} fill={off ? "#d2d2d2" : "#5f8fc4"} stroke={off ? "#b8b8b8" : "#31587f"}>
      {double ? <path d="M1 .8v12.400L6 9v4.200L14 7 6 .8V5z" /> : <path d="M3 .8v12.400L12 7z" />}
    </svg>
  </button>
);

function Dialog() {
  return (
    <div role="dialog" aria-label="drogi" className={`absolute top-[94px] left-[102px] flex h-[579px] w-[1055px] flex-col border border-[#707070] bg-[#efefef] text-[11px] text-black shadow-[0_8px_20px_1px_rgba(0,0,0,0.42)] ${UI}`}>
      <header className="flex h-[30px] shrink-0 items-center bg-white pl-2">
        <QMark />
        <h1 className={`ml-2 text-[12px] whitespace-nowrap ${SEGOE}`}>drogi — Wszystkie obiekty: 4, Odfiltrowane: 4, Wybrane: 0</h1>
        <div className="ml-auto flex">
          <button type="button" aria-label="Minimalizuj" className="flex h-[30px] w-[46px] items-center justify-center"><svg width="11" height="11" stroke="#000" aria-hidden="true"><path d="M0 5.500h11" /></svg></button>
          <button type="button" aria-label="Maksymalizuj" className="flex h-[30px] w-[46px] items-center justify-center"><svg width="11" height="11" stroke="#000" fill="none" aria-hidden="true"><path d="M.5.5h10v10H.5z" /></svg></button>
          <button type="button" aria-label="Zamknij" className="flex h-[30px] w-[46px] items-center justify-center"><svg width="11" height="11" stroke="#000" aria-hidden="true"><path d="m.5.5 10 10m0-10-10 10" /></svg></button>
        </div>
      </header>
      <div className="flex h-[33px] shrink-0 items-center gap-px pb-[3px] pl-1">
        <Mini label="Tryb edycji" pressed><Svg size={18}><Pencil /></Svg></Mini>
        <Mini label="Edycja wielu"><Svg size={17}><path d="M1 2h20v5H1zM1 9h20v5H1zM1 16h20v6H1z" fill="#fbe03a" stroke="#c9a600" /><Pencil fill="#e8642a" tip="#a33b10" dx={3} /></Svg></Mini>
        <Mini label="Zapisz"><Svg size={17}><Disk bg="#f7f23a" /></Svg></Mini>
        <Mini label="Odśwież"><Svg size={17} faded><g stroke="#777" strokeWidth="4"><path d="M4 10c1-6 10-8 14-3M20 14c-1 6-10 8-14 3" /></g><path d="M22 2v8h-8zM2 22v-8h8z" fill="#777" /></Svg></Mini>
        <MiniSep />
        <Mini label="Dodaj obiekt"><Svg size={18}><TableI><rect x="1" y="10" width="21" height="5" fill="#f7e33e" stroke="#c9a600" /></TableI><Star /></Svg></Mini>
        <Mini label="Usuń"><Svg size={17} faded><Trash /></Svg></Mini>
        <Mini label="Wytnij"><Svg size={17} faded><Scissors /></Svg></Mini>
        <Mini label="Kopiuj"><Svg size={17} faded><CopyI /></Svg></Mini>
        <Mini label="Wklej"><Svg size={17}><PasteI fill="#cfa878" /></Svg></Mini>
        <MiniSep />
        <Mini label="Wybierz wyrażeniem"><Svg size={17}><rect x="9" y="9" width="13" height="13" fill="#fde74a" stroke="#c9a600" strokeWidth="1.300" /><g transform="translate(-5 -2)"><Epsilon /></g></Svg></Mini>
        <Mini label="Zaznacz wszystko"><Svg size={17}><path d="M2 2h20v6H2zM2 9h20v6H2zM2 16h20v6H2z" fill="#fde740" stroke="#c9a600" /></Svg></Mini>
        <Mini label="Odwróć"><Svg size={17}><path d="M3 3h18v18H3z" fill="#f2f2f2" stroke="#999" /><path d="M3 3v18h18z" fill="#fde740" stroke="#c9a600" /></Svg></Mini>
        <Mini label="Odznacz"><Svg size={17}><rect x="2" y="2" width="15" height="15" fill="#fde740" stroke="#c9a600" /><NoBadge /></Svg></Mini>
        <Mini label="Filtr"><Svg size={17}><Funnel /></Svg></Mini>
        <Mini label="Na górę"><Svg size={17}><TableI><rect x="2" y="17" width="19" height="5" fill="#f7e33e" /><path d="M11.500 16V6M8 9.500l3.500-4 3.500 4M4 3.500h15" stroke="#24486e" strokeWidth="2" /></TableI></Svg></Mini>
        <Mini label="Przesuń do zaznaczonych"><Svg size={18}><FourArrows center /></Svg></Mini>
        <Mini label="Powiększ do zaznaczonych"><Svg size={18}><path d="M3 4h9v9H3z" fill="#fde740" stroke="#c9a600" /><Lens fill="#f3efcf" /></Svg></Mini>
        <MiniSep />
        <Mini label="Nowe pole"><Svg size={17}><TableI><rect x="4" y="1" width="5" height="22" fill="#ecd04a" stroke="#b09010" /></TableI><Star /></Svg></Mini>
        <Mini label="Usuń pole"><Svg size={17}><TableI><rect x="4" y="1" width="5" height="22" fill="#e58a8a" stroke="#c05050" /></TableI><rect x="13" y="13" width="10" height="10" rx="2" fill="#dd6a6a" /><path d="m15.500 15.500 5 5m0-5-5 5" stroke="#fff" strokeWidth="1.500" /></Svg></Mini>
        <Mini label="Organizuj kolumny"><Svg size={17}><TableI /><Pencil fill="#e8642a" tip="#a33b10" /></Svg></Mini>
        <Mini label="Kalkulator pól"><Svg size={17}><path d="M2 1v22M22 1v22M2 2h20M2 9h20M2 16h20M0 22.500h24" stroke="#777" strokeWidth="1.400" /><g strokeWidth="4"><path d="M7 5h3M14 5h4" stroke="#d04545" strokeDasharray="3 1" /><path d="M5 12h6M15 12h3" stroke="#5aa05a" strokeDasharray="2 1" /><path d="M6 19h12" stroke="#5f8fc4" strokeDasharray="3 1" /></g></Svg></Mini>
        <MiniSep />
        <Mini label="Formatowanie warunkowe"><Svg size={17}><rect x="2" y="1" width="20" height="6" rx="1" fill="#fff" stroke="#999" /><rect x="2" y="9" width="20" height="6" rx="1" fill="#7cc27c" stroke="#4a944a" /><rect x="2" y="17" width="20" height="6" rx="1" fill="#fff" stroke="#999" /><path d="M10 4h10" stroke="#444" strokeWidth="2" /><path d="M6 20h12" stroke="#d04545" strokeWidth="2" /></Svg></Mini>
        <MiniSep />
        <Mini label="Dokuj tabelę"><Svg size={17}><rect x="5" y="1" width="18" height="15" fill="#e8e8e8" stroke="#999" /><rect x="5" y="1" width="18" height="4" fill="#666" /><rect x="1" y="8" width="17" height="15" fill="#f4f8fc" stroke="#8aa8c8" /><path d="M1 9.500h17" stroke="#9a9a9a" strokeWidth="3" /><path d="M4 13v8M9 13v8M14 13v8" stroke="#8fb2d4" strokeWidth="3" /></Svg></Mini>
        <Mini label="Akcje"><Svg size={18}><circle cx="10" cy="10" r="8" fill="#dfe6ee" stroke="#7f8a96" strokeWidth="2.500" strokeDasharray="3 1.200" /><circle cx="10" cy="10" r="5.500" fill="#4d79ab" /><path d="m8.500 7 4.500 3-4.500 3z" fill="#fff" /><path d="m13 12 2 10 2.500-3 4 4 1.500-1.500-4-4 3-2z" fill="#fff" stroke="#777" /></Svg></Mini>
      </div>
      <div className="flex h-6 shrink-0 items-center pl-[3px]">
        <label className={`${pushBtn} relative flex h-6 w-[98px] items-center pl-[5px]`}>
          <span className="text-[9px] font-bold text-[#555]">123</span>
          <select aria-label="Pole" className="min-w-0 flex-1 appearance-none pl-[2px] outline-none"><option>ID</option></select>
          <span className="pointer-events-none absolute right-[6px]"><Down /></span>
        </label>
        <span className="w-3.5 text-center">=</span>
        <button type="button" aria-label="Edytor wyrażeń" className={`${pushBtn} flex h-6 w-6 items-center justify-center`}><Svg size={18}><Epsilon /></Svg></button>
        <span className="ml-[6px] flex h-6 min-w-0 flex-1 items-center rounded-[3px] border border-[#adadad] bg-white">
          <input aria-label="Wyrażenie" className="h-full min-w-0 flex-1 px-1 outline-none" />
          <button type="button" aria-label="Ostatnie wyrażenia" className="flex h-full w-5 items-center justify-center border-l border-[#b5b5b5] bg-linear-to-b from-[#fdfdfd] to-[#efefef]"><Down /></button>
        </span>
        <button type="button" className={`${pushBtn} ml-[3px] h-5 w-[107px] whitespace-nowrap`}>Aktualizuj wszystko</button>
        <button type="button" disabled className={`${pushBtn} ml-[3px] h-5 w-[119px] border-[#c9c9c9] whitespace-nowrap text-[#8a8a8a]`}>Aktualizuj zaznaczone</button>
      </div>
      <div className="flex min-h-0 flex-1 pt-[2px]">
        <div className="flex w-[256px] shrink-0 flex-col">
          <button type="button" className="relative flex h-[26px] items-center pl-[6px] text-left">
            <Svg size={16}><g transform="translate(-5 -4)"><Epsilon /></g><g transform="translate(10 11) scale(.55)"><Lens fill="#fff" /></g></Svg>
            <span className="ml-[2px]">Wyrażenie</span>
            <span className="absolute right-[2px] bottom-[6px]"><Down small /></span>
          </button>
          <ul className="min-h-0 flex-1 border border-l-0 border-[#b0b0b0] bg-white text-[12px]">
            {["1", "2", "3", "4"].map((n) => (
              <li key={n} className="h-6 first:bg-[#efefef]">
                <label className="flex h-6 items-center pl-[5px]">
                  <input type="checkbox" className="mb-1 h-[13px] w-[13px] appearance-none border border-[#8a8a8a] bg-[#e6e6e6]" />
                  <span className="ml-2.5 leading-6">{n}</span>
                </label>
              </li>
            ))}
          </ul>
          <div className="flex h-[27px] shrink-0 items-center gap-px">
            <NavArrow label="Pierwszy" flip double off />
            <NavArrow label="Poprzedni" flip off />
            <NavArrow label="Następny" />
            <NavArrow label="Ostatni" double />
            <span className="text-[16px] leading-6">1 / 4</span>
            <span className="ml-auto" />
            <Mini label="Podświetl" pressed><Svg size={18}><circle cx="12" cy="9" r="7.500" fill="#f9f36a" stroke="#d9cf3a" /><path d="M8.500 16h7v5l-2 2h-3l-2-2z" fill="#888" /></Svg></Mini>
            <span className="w-5" />
            <Mini label="Przesuń"><Svg size={17}><FourArrows /></Svg></Mini>
            <Mini label="Powiększ" pressed><Svg size={18}><Lens /></Svg></Mini>
          </div>
        </div>
        <form className="mb-[2px] ml-1 flex min-w-0 flex-1 flex-col gap-[6px] border-2 border-[#b4b4b4] pt-[18px] pr-7 pl-[17px]">
          {FIELDS.map(([name, value]) => (
            <div key={name} className="flex items-center">
              <label htmlFor={name} className="w-14 whitespace-nowrap">{name}</label>
              <span className={`${box} min-w-0 flex-1`}>
                <input id={name} defaultValue={value} className="min-w-0 flex-1 pl-[2px] outline-none" />
                <button type="button" aria-label={`Wyczyść ${name}`} className="mr-[7px]"><Clear /></button>
              </span>
            </div>
          ))}
        </form>
      </div>
      <footer className="flex h-[27px] shrink-0 items-start pt-px pl-[3px]">
        <button type="button" className={`${pushBtn} relative flex h-6 w-[149px] items-center gap-[2px] pl-1 whitespace-nowrap`}><Svg size={16}><Funnel /></Svg>Pokaż wszystkie obiekty<span className="absolute right-px bottom-[2px]"><Down small /></span></button>
        <span className="mr-[2px] ml-auto flex">
          <Mini label="Widok formularza" pressed><Svg size={17}><rect x="2" y="2" width="20" height="20" fill="#dbe8f5" stroke="#6f9ac6" strokeWidth="1.500" /><path d="M5 8h5M5 15h5" stroke="#333" strokeWidth="1.500" /><rect x="12" y="5" width="8" height="5" rx="1" fill="#fff" stroke="#6f9ac6" strokeWidth="1.500" /><rect x="12" y="13" width="8" height="5" rx="1" fill="#fff" stroke="#6f9ac6" strokeWidth="1.500" /></Svg></Mini>
          <Mini label="Widok tabeli"><Svg size={17}><TableI /></Svg></Mini>
        </span>
      </footer>
    </div>
  );
}

export default function App() {
  return (
    <div className="relative flex h-screen w-full overflow-hidden bg-[#efefef] text-black">
      <PdfViewer />
      <section className="flex min-w-0 flex-1 flex-col">
        <MainToolbar />
        <SelectToolbar />
        <div className="flex min-h-0 flex-1 pt-px">
          <SidePanels />
          <main className="flex min-w-0 flex-1 flex-col border-l border-[#b4b4b4]">
            <div role="alert" className={`flex h-[43px] shrink-0 items-center border border-[#953a3b] bg-[#d65253] pr-2.5 pl-2.5 text-[11px] leading-[13px] text-white ${UI}`}>
              <Svg size={20}><circle cx="12" cy="12" r="10" fill="#333" stroke="#fff" strokeWidth="3" /><path d="m6 18 12-12" stroke="#fff" strokeWidth="3" /></Svg>
              <p className="ml-auto w-[392px]">Nie powiodło się tworzenie warstwy: Failed to create file drogi.shp: Permission denied</p>
              <button type="button" aria-label="Zamknij komunikat" className="ml-[22px] shrink-0"><Svg size={17}><circle cx="12" cy="12" r="12" fill="#2e1515" /><path d="m7 7 10 10M17 7 7 17" stroke="#fff" strokeWidth="3.500" /></Svg></button>
            </div>
            <div className="relative min-h-0 flex-1 overflow-hidden"><MapCanvas /></div>
          </main>
        </div>
        <StatusBar />
      </section>
      <Dialog />
    </div>
  );
}
